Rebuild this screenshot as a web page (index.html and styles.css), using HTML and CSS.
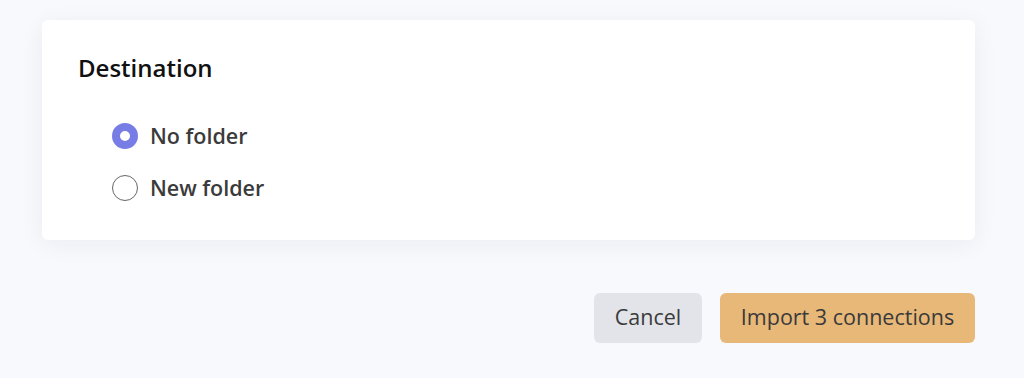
FILE: index.html
```html
<!DOCTYPE html>
<html lang="en">
	<head>
		<meta charset="UTF-8" />
		<meta name="viewport" content="width=device-width, initial-scale=1.0" />
		<title>Import connections</title>
		<link rel="stylesheet" href="styles.css">
	</head>

	<body>
		<div class="dialog">
			<section class="card">
				<h2>Destination</h2>
				<div class="radio-list">
					<label class="radio">
						<input type="radio" name="destination" checked>
						<span class="radio-mark"></span>
						<span>No folder</span>
					</label>
					<label class="radio">
						<input type="radio" name="destination">
						<span class="radio-mark"></span>
						<span>New folder</span>
					</label>
				</div>
			</section>
			<div class="actions">
				<button class="btn btn-cancel">Cancel</button>
				<button class="btn btn-primary">Import 3 connections</button>
			</div>
		</div>
	</body>
</html>
```

FILE: styles.css
```css
html, body {
	margin: 0;
	padding: 0;
	font-family: 'Open Sans', Lato, sans-serif;
}

h1, h2, h3, h4, h5, h6 {
	margin: 0;
}

body {
	background-color: #f8f9fc;
	width: 100%;
	height: 100%;
}

.dialog {
	padding: 20px 49px 0 42px;
}

.card {
	background-color: #fff;
	border-radius: 6px;
	box-shadow: 0 4px 24px rgba(30, 40, 90, 0.06);
	padding: 33px 36px 39px;
}

.card h2 {
	font-size: 24px;
	font-weight: 600;
	line-height: 30px;
	color: #111;
}

.radio-list {
	display: flex;
	flex-direction: column;
	gap: 26px;
	padding: 40px 0 0 34px;
}

.radio {
	display: flex;
	align-items: center;
	gap: 12px;
	font-size: 21.5px;
	font-weight: 600;
	line-height: 26px;
	color: #3b3b3b;
	cursor: pointer;
}

.radio input {
	display: none;
}

.radio-mark {
	box-sizing: border-box;
	width: 26px;
	height: 26px;
	border-radius: 50%;
	border: 1.5px solid #666;
}

.radio input:checked + .radio-mark {
	border: 8px solid #787de6;
}

.actions {
	display: flex;
	justify-content: flex-end;
	gap: 18px;
	padding-top: 53px;
}

.btn {
	height: 50px;
	border: none;
	border-radius: 6px;
	padding: 0 0 4px;
	font-family: inherit;
	font-size: 21.5px;
	font-weight: 400;
	color: #3a3a3a;
	cursor: pointer;
}

.btn-cancel {
	width: 108px;
	background-color: #e2e4e9;
}

.btn-primary {
	width: 255px;
	background-color: #e8b879;
}
```
